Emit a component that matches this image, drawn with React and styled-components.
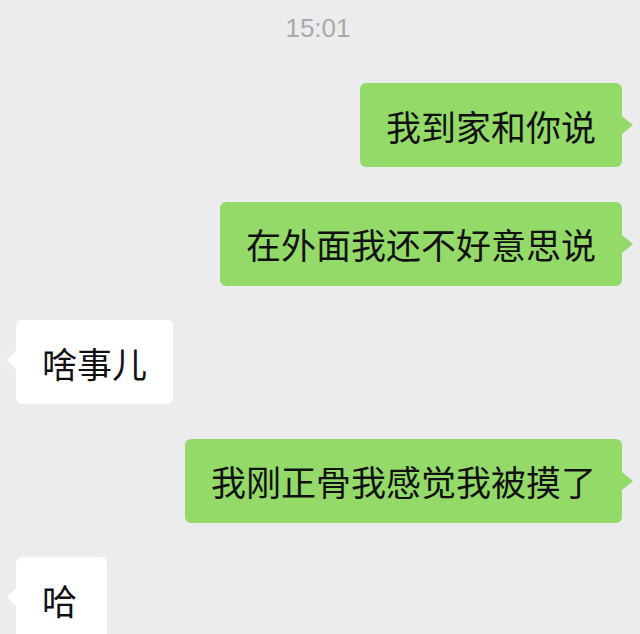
import styled, { createGlobalStyle, css } from 'styled-components'

const GlobalStyle = createGlobalStyle`
    html, body {
        margin: 0;
        padding: 0;
        background: #ececee;
        overflow: hidden;
    }
`;

const mensajes = [
    { propio: true, texto: '我到家和你说' },
    { propio: true, texto: '在外面我还不好意思说' },
    { propio: false, texto: '啥事儿' },
    { propio: true, texto: '我刚正骨我感觉我被摸了' },
    { propio: false, texto: '哈' },
];

const App = () => {
    return (
        <>
            <GlobalStyle />
            <Chat>
                <Hora>15:01</Hora>
                <Lista>
                    {mensajes.map((m, i) => (
                        <Fila key={i} $propio={m.propio}>
                            <Burbuja $propio={m.propio}>{m.texto}</Burbuja>
                        </Fila>
                    ))}
                </Lista>
            </Chat>
        </>
    )
}

export default App;

const Chat = styled.div`
    width: 640px;
    height: 634px;
    overflow: hidden;
    padding-top: 13px;
    box-sizing: border-box;
    display: flex;
    flex-direction: column;
    font-family: "Noto Sans CJK SC", "Noto Sans", sans-serif;
`;
const Hora = styled.div`
    align-self: center;
    margin-left: -4px;
    font-family: "Liberation Sans", Arial, sans-serif;
    font-size: 26px;
    line-height: 30px;
    color: #a9a9ab;
    margin-bottom: 40px;
`;
const Lista = styled.div`
    display: flex;
    flex-direction: column;
    gap: 34.5px;
`;
const Fila = styled.div`
    display: flex;
    justify-content: ${p => p.$propio ? 'flex-end' : 'flex-start'};
    padding: ${p => p.$propio ? '0 18px 0 0' : '0 0 0 16px'};
`;
const Burbuja = styled.div`
    position: relative;
    height: 84px;
    min-width: 91px;
    box-sizing: border-box;
    display: flex;
    align-items: center;
    padding: 0 26px;
    border-radius: 6px;
    font-size: 35px;
    line-height: 1;
    color: #111;
    background: ${p => p.$propio ? '#93da68' : '#ffffff'};

    &::after{
        content: '';
        position: absolute;
        top: 50%;
        margin-top: -9px;
        border-top: 9px solid transparent;
        border-bottom: 9px solid transparent;
        ${p => p.$propio ? css`
            right: -11px;
            border-left: 11px solid #93da68;
        ` : css`
            left: -9px;
            margin-top: -11px;
            border-right: 9px solid #ffffff;
        `}
    }
`;
